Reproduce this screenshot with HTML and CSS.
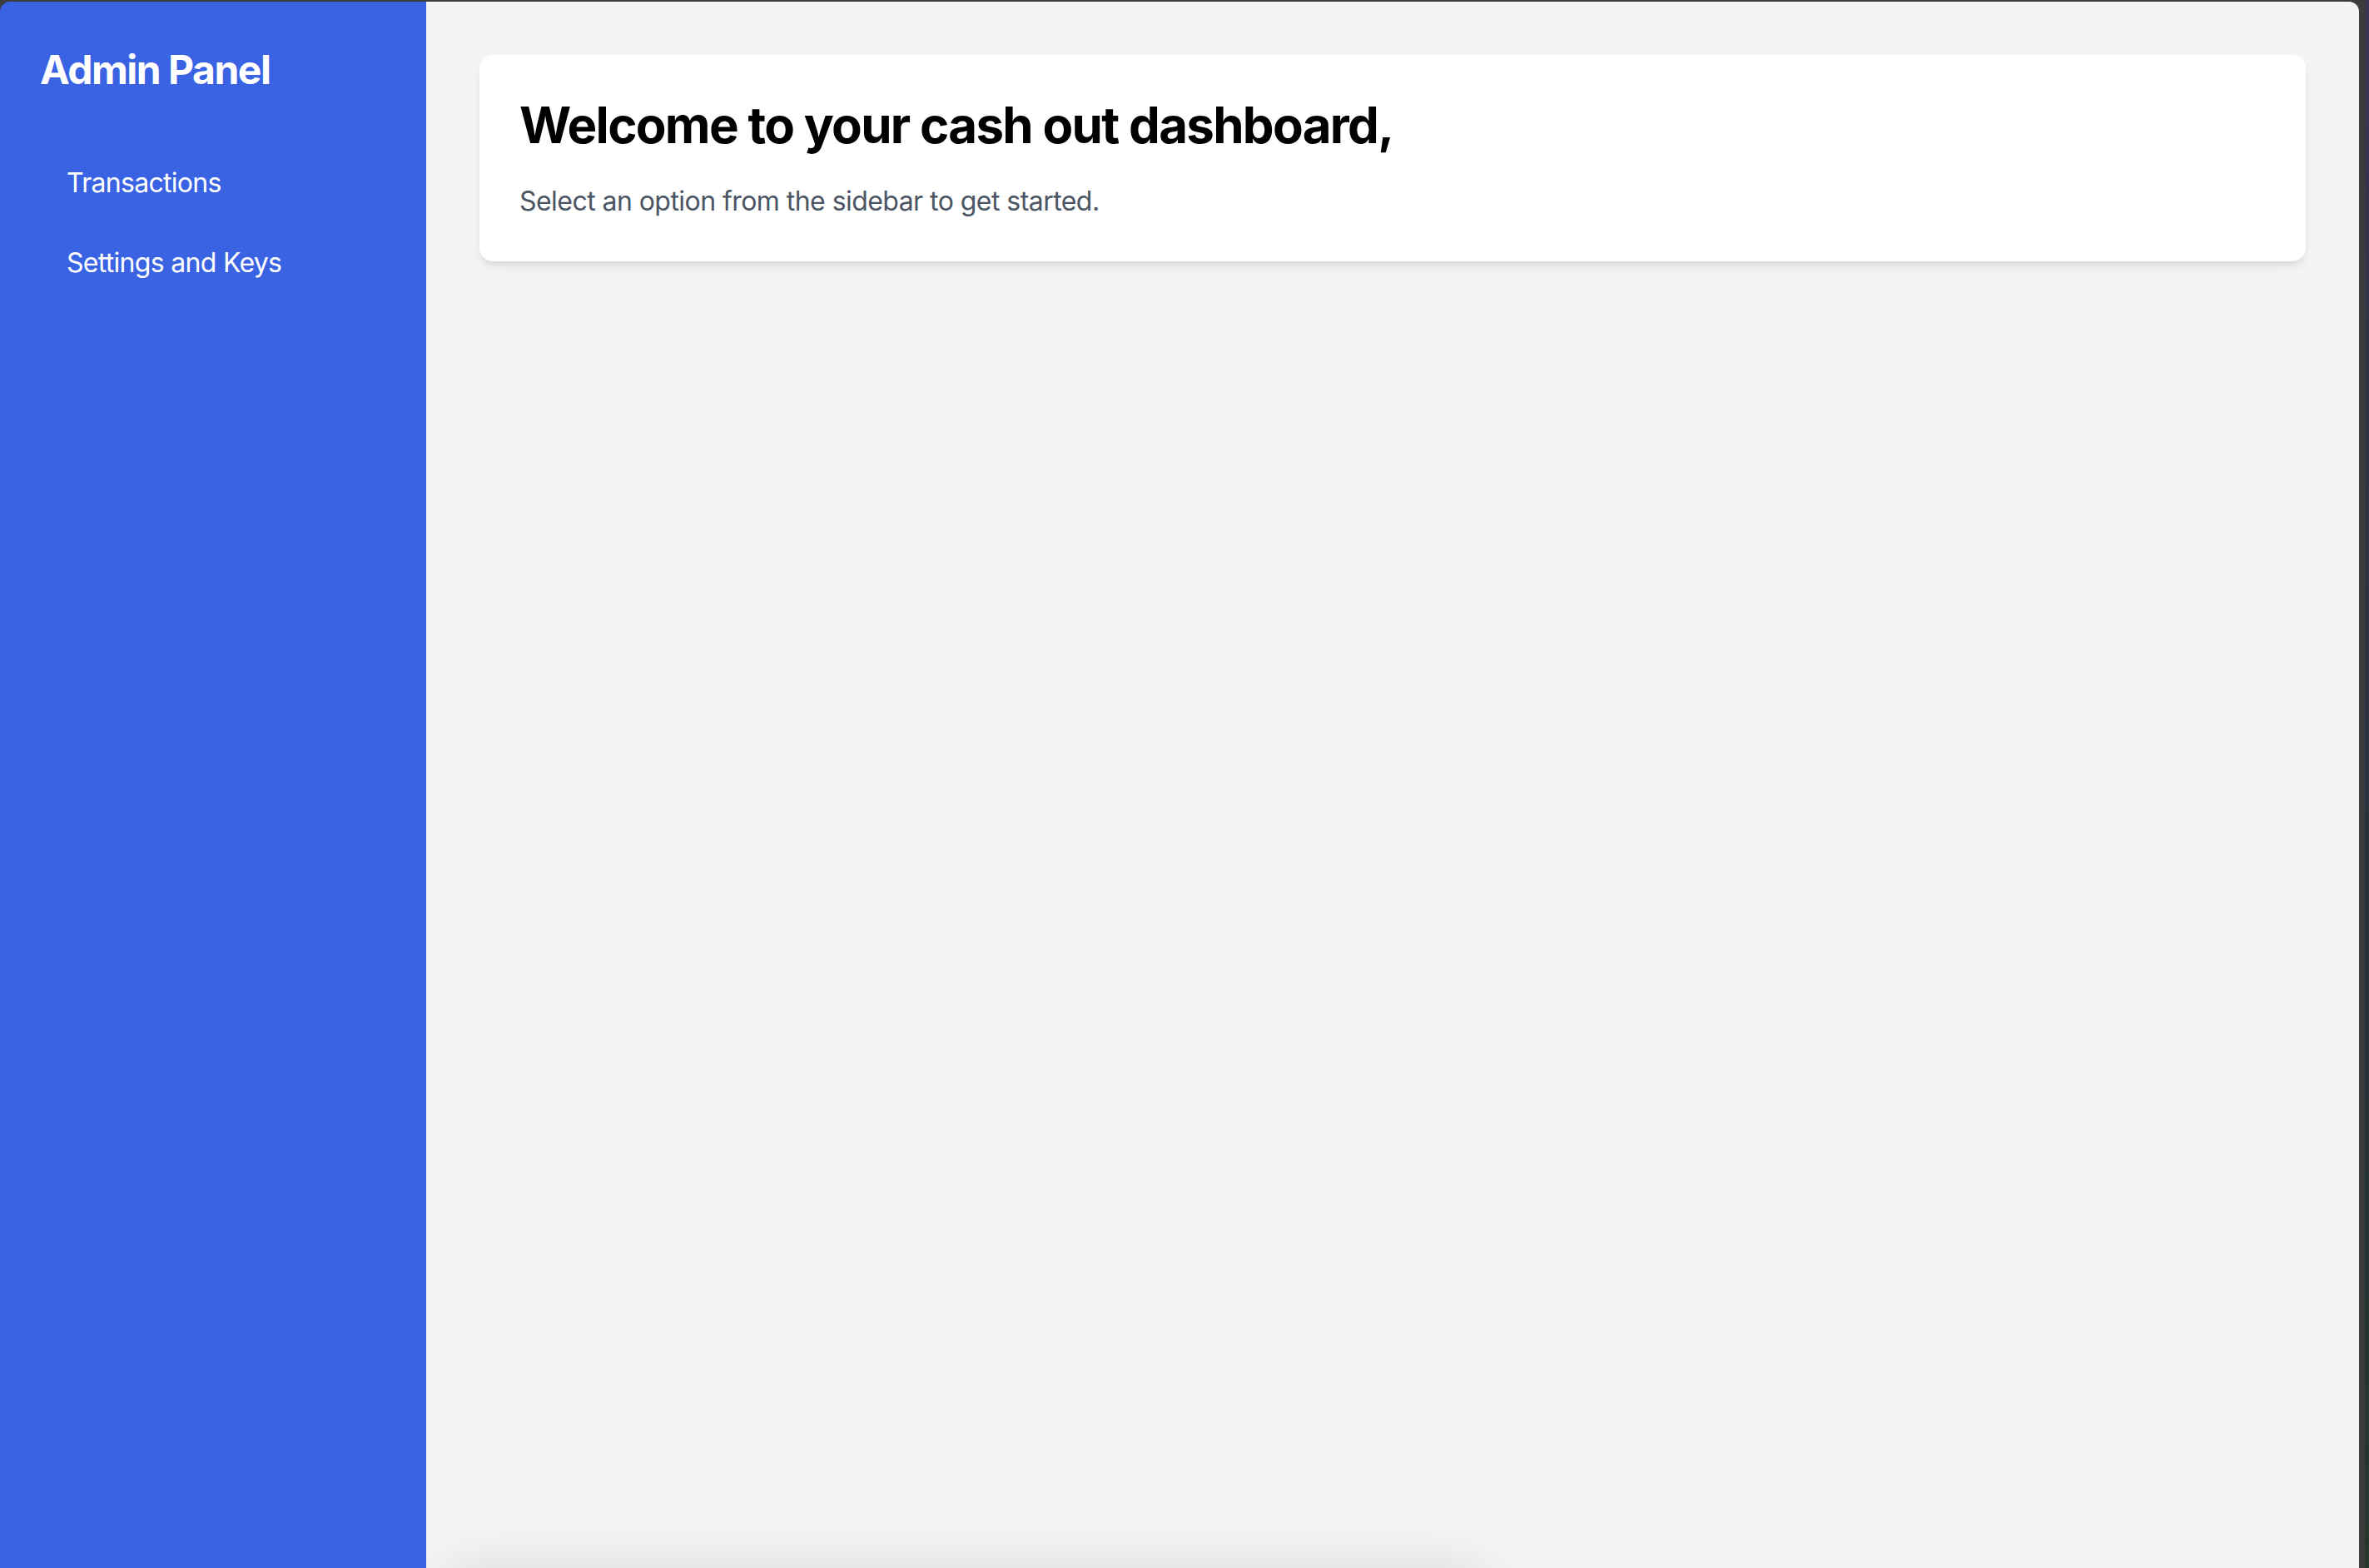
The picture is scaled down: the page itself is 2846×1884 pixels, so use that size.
FILE: index.html
```html
<!DOCTYPE html>
<html lang="en">
<head>
<meta charset="utf-8">
<title>Admin Panel</title>
<link rel="stylesheet" href="styles.css">
</head>
<body>
<div class="window">
  <aside class="sidebar">
    <h1 class="brand">Admin Panel</h1>
    <nav class="nav">
      <a class="nav-item" href="#">Transactions</a>
      <a class="nav-item" href="#">Settings and Keys</a>
    </nav>
  </aside>
  <main class="main">
    <section class="card">
      <h2 class="card-title">Welcome to your cash out dashboard,</h2>
      <p class="card-text">Select an option from the sidebar to get started.</p>
    </section>
  </main>
  <div class="floating-shadow"></div>
</div>
<div class="desktop-edge"></div>
</body>
</html>
```

FILE: styles.css
```css
* { box-sizing: border-box; }

html, body {
  margin: 0;
  padding: 0;
  height: 100%;
}

body {
  background: #3c3c3c;
  font-family: Inter, "Noto Sans", sans-serif;
  overflow: hidden;
  position: relative;
}

.window {
  position: relative;
  margin-top: 2px;
  width: 2834px;
  height: 1882px;
  display: flex;
  border-radius: 12px 12px 0 0;
  overflow: hidden;
}

.sidebar {
  width: 512px;
  flex: 0 0 512px;
  background: #3a63e4;
  padding: 50px 48px 48px 48px;
  color: #ffffff;
}

.brand {
  margin: 0 0 64px 0;
  font-size: 48px;
  line-height: 64px;
  font-weight: 700;
  letter-spacing: -1.5px;
}

.nav {
  display: flex;
  flex-direction: column;
  gap: 16px;
}

.nav-item {
  display: block;
  padding: 16px 32px;
  font-size: 32px;
  line-height: 48px;
  color: #ffffff;
  text-decoration: none;
  border-radius: 8px;
  letter-spacing: -0.7px;
}

.main {
  flex: 1;
  background: #f3f4f6;
  padding: 64px;
}

.card {
  background: #ffffff;
  border-radius: 16px;
  padding: 48px;
  box-shadow: 0 8px 12px -2px rgba(0, 0, 0, 0.08), 0 4px 8px -4px rgba(0, 0, 0, 0.08);
}

.card-title {
  margin: 0 0 32px 0;
  font-size: 60px;
  line-height: 72px;
  font-weight: 700;
  color: #000000;
  letter-spacing: -1.7px;
}

.card-text {
  margin: 0;
  font-size: 32px;
  line-height: 48px;
  color: #4b5563;
  letter-spacing: -0.55px;
}

.floating-shadow {
  position: absolute;
  left: 540px;
  width: 1240px;
  top: 1900px;
  height: 120px;
  border-radius: 24px;
  box-shadow: 0 0 70px 10px rgba(0, 0, 0, 0.14);
}

.desktop-edge {
  position: absolute;
  top: 0;
  right: 0;
  width: 5px;
  height: 100%;
  background: linear-gradient(to bottom, #3a3550, #26303a 60%, #22382c);
}
```
